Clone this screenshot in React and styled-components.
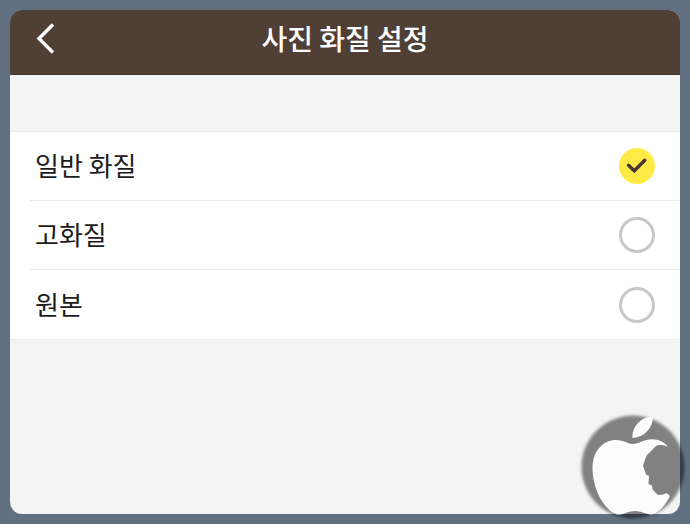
import React, { useState } from "react";
import styled, { createGlobalStyle, ThemeProvider } from "styled-components";

const theme = {
  pageColor: "#607081",
  headerColor: "#503f35",
  panelColor: "#f4f4f4",
  lineColor: "#ebebeb",
  textColor: "#1c1c1c",
  yellowColor: "#ffeb46",
  ringColor: "#c8c8c8"
};

const GlobalStyle = createGlobalStyle`
  * {
    box-sizing: border-box;
  }
  body {
    margin: 0;
    font-family: "Noto Sans CJK KR", "Noto Sans", sans-serif;
    background: ${({ theme }) => theme.pageColor};
  }
`;

const Page = styled.div`
  position: relative;
  display: flex;
  min-height: 100vh;
  padding: 10px;
`;

const Panel = styled.main`
  flex: 1;
  display: flex;
  flex-flow: column nowrap;
  overflow: hidden;
  border-radius: 12px;
  background: ${({ theme }) => theme.panelColor};
`;

const Header = styled.header`
  display: grid;
  grid-template-columns: 56px 1fr 56px;
  align-items: center;
  height: 65px;
  padding: 0 8px 8px;
  color: #fff;
  background: ${({ theme }) => theme.headerColor};
  border-bottom: 1px solid #44342b;
`;

const BackButton = styled.button`
  display: flex;
  align-items: center;
  justify-content: center;
  height: 48px;
  padding: 0;
  border: 0;
  color: inherit;
  background: none;
  cursor: pointer;
`;

const Title = styled.h1`
  margin: 0;
  font-size: 28px;
  font-weight: 500;
  line-height: 40px;
  text-align: center;
`;

const Options = styled.div`
  margin-top: 56px;
  padding-left: 20px;
  background: #fff;
  border-top: 1px solid ${({ theme }) => theme.lineColor};
  border-bottom: 1px solid ${({ theme }) => theme.lineColor};
`;

const Row = styled.label`
  display: flex;
  align-items: center;
  justify-content: space-between;
  height: 69px;
  padding: 0 25px 0 5px;
  cursor: pointer;
  &:not(:last-child) {
    border-bottom: 1px solid ${({ theme }) => theme.lineColor};
  }
`;

const RowText = styled.span`
  padding-bottom: 2px;
  font-size: 26px;
  line-height: 36px;
  color: ${({ theme }) => theme.textColor};
`;

const RadioBox = styled.span`
  display: grid;
  place-items: center;
  > * {
    grid-area: 1 / 1;
  }
  svg {
    pointer-events: none;
  }
`;

const Radio = styled.input`
  appearance: none;
  width: 36px;
  height: 36px;
  margin: 0;
  border: 3px solid ${({ theme }) => theme.ringColor};
  border-radius: 50%;
  background: #fff;
  cursor: pointer;
  &:checked {
    border-color: ${({ theme }) => theme.yellowColor};
    background: ${({ theme }) => theme.yellowColor};
  }
`;

const Badge = styled.svg`
  position: absolute;
  right: 0;
  bottom: 0;
  pointer-events: none;
`;

const BackIcon = () => (
  <svg width="20" height="32" viewBox="0 0 20 32" fill="none" aria-hidden="true">
    <path d="M17 2.5 3 16.5 17 30.5" stroke="currentColor" strokeWidth="3.4" />
  </svg>
);

const CheckIcon = () => (
  <svg width="36" height="36" viewBox="0 0 36 36" fill="none" aria-hidden="true">
    <path
      d="M9.5 17.3 15.3 22.8 25.8 12.2"
      stroke="#4a3632"
      strokeWidth="3.4"
      strokeLinecap="round"
    />
  </svg>
);

const AppleBadge = () => (
  <Badge width="120" height="120" viewBox="0 0 120 120" aria-hidden="true">
    <defs>
      <filter id="soft" x="-10%" y="-10%" width="120%" height="120%">
        <feGaussianBlur stdDeviation="1.4" />
      </filter>
    </defs>
    <circle cx="63" cy="63" r="51.5" fill="#000" fillOpacity="0.47" filter="url(#soft)" />
    <path
      d="M62.5 34C61.5 24 70 13 82.5 12.3C84 22 75 33.5 62.5 34Z"
      fill="#fcfcfc"
    />
    <path
      d="M63 40C69 40 74 35.3 82 35.3C89 35.3 94 38 98 42.7C93 40.8 89 40.6 86 42L82 46L77 51L74.5 57L73 62L75 67L76 70.5L79 72L78.5 80L82 81.5L82.5 85.5L88 91L93 90.5L96.5 89L100 92C96 100 90 108 83 110.3C76 111 72 107 65 107C58 107 54 111 47 110.5C33 106 22 83 22.5 63C23 46 34 36 46 36C54 36 58 40 63 40Z"
      fill="#fcfcfc"
    />
  </Badge>
);

const qualities = [
  { id: "normal", label: "일반 화질" },
  { id: "high", label: "고화질" },
  { id: "original", label: "원본" }
];

const App = () => {
  const [quality, setQuality] = useState("normal");
  return (
    <ThemeProvider theme={theme}>
      <GlobalStyle />
      <Page>
        <Panel>
          <Header>
            <BackButton type="button" aria-label="뒤로">
              <BackIcon />
            </BackButton>
            <Title>사진 화질 설정</Title>
          </Header>
          <Options>
            {qualities.map(({ id, label }) => (
              <Row key={id} htmlFor={id}>
                <RowText>{label}</RowText>
                <RadioBox>
                  <Radio
                    type="radio"
                    name="quality"
                    id={id}
                    checked={quality === id}
                    onChange={() => setQuality(id)}
                  />
                  {quality === id && <CheckIcon />}
                </RadioBox>
              </Row>
            ))}
          </Options>
        </Panel>
        <AppleBadge />
      </Page>
    </ThemeProvider>
  );
};

export default App;
